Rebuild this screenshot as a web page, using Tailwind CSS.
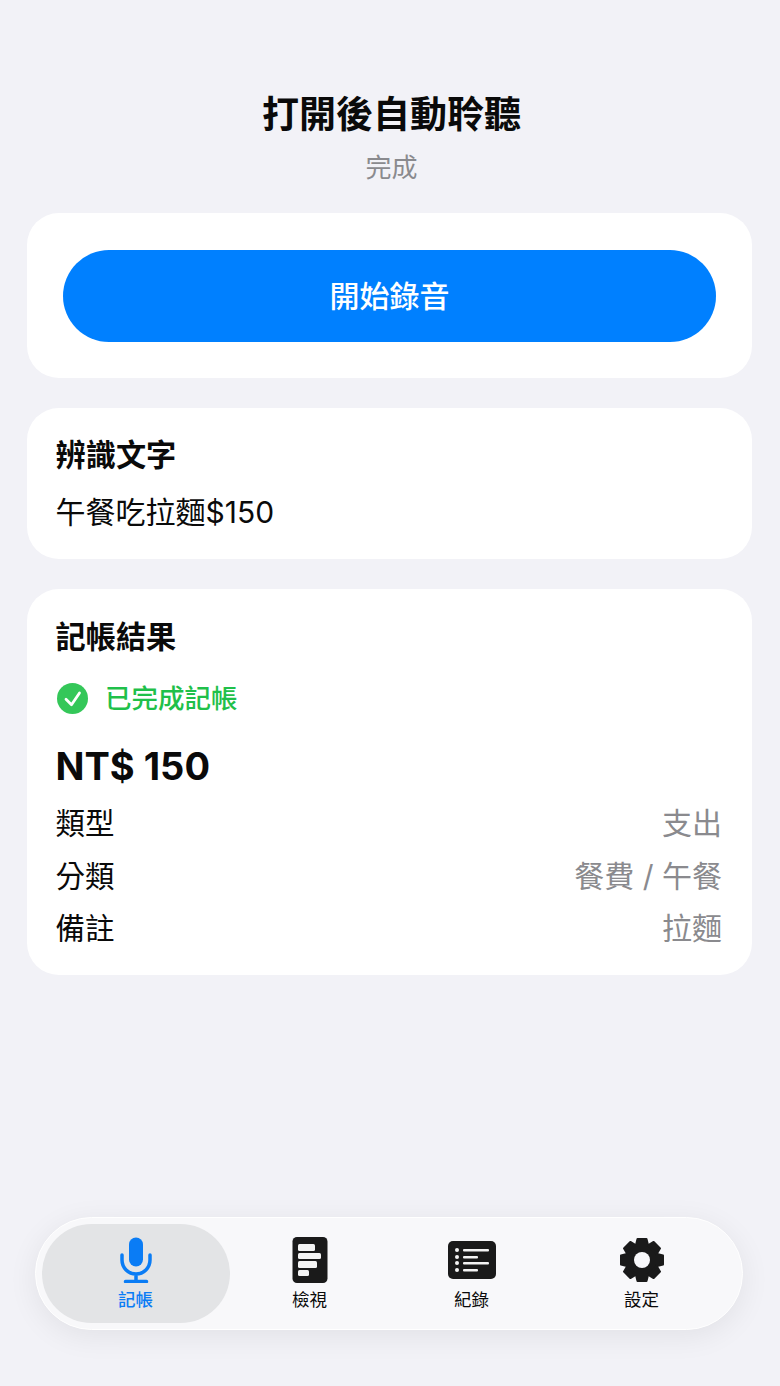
<!DOCTYPE html>
<html lang="zh-TW">
<head>
    <meta charset="UTF-8">
    <meta name="viewport" content="width=device-width, initial-scale=1.0">
    <title>打開後自動聆聽</title>
    <script src="https://cdn.jsdelivr.net/npm/@tailwindcss/browser@4"></script>
</head>
<body class="bg-[#f2f2f7] h-[1386px] w-[780px] overflow-hidden flex flex-col font-['Inter','Noto_Sans_CJK_TC',sans-serif] text-[#0a0a0a]">
    <!-- Header -->
    <header class="pt-[92px] pl-[3px] text-center">
        <h1 class="text-[37px] leading-[46px] font-bold">打開後自動聆聽</h1>
        <p class="mt-[13px] text-[26px] leading-[34px] text-[#8a8a8e]">完成</p>
    </header>

    <main class="mt-[28px] ml-[27px] mr-[28px] flex flex-col gap-[30px]">
        <!-- Record button -->
        <section class="bg-white rounded-[32px] px-[36px] pt-[37px] h-[165px]">
            <button class="w-full h-[92px] rounded-full bg-[#0080ff] text-white text-[30px] font-medium">開始錄音</button>
        </section>

        <!-- Recognized text -->
        <section class="bg-white rounded-[32px] h-[151px] pl-[28.5px] pr-[30px] pt-[27px]">
            <h2 class="text-[30.200px] leading-[40px] font-semibold">辨識文字</h2>
            <p class="mt-[17px] text-[30px] leading-[40px]">午餐吃拉麵$150</p>
        </section>

        <!-- Result -->
        <section class="bg-white rounded-[32px] h-[386px] pl-[28.5px] pr-[30px] pt-[28px]">
            <h2 class="text-[30.200px] leading-[40px] font-semibold">記帳結果</h2>
            <div class="mt-[23px] ml-[1.500px] flex items-center gap-[17px]">
                <svg class="w-[31px] h-[31px] shrink-0" viewBox="0 0 31 31">
                    <circle cx="15.500" cy="15.500" r="15.500" fill="#34c759"/>
                    <path d="M9 16.300l5.500 5.500L22.500 10" fill="none" stroke="#fff" stroke-width="2.800" stroke-linecap="round" stroke-linejoin="round"/>
                </svg>
                <span class="text-[26.500px] leading-[36px] font-medium text-[#1fc04a]">已完成記帳</span>
            </div>
            <p class="mt-[27px] text-[38px] leading-[46px] font-bold">NT$ 150</p>
            <dl class="mt-[8px] text-[29.500px] leading-[52.500px]">
                <div class="flex justify-between"><dt>類型</dt><dd class="text-[30px] text-[#8a8a8e]">支出</dd></div>
                <div class="flex justify-between"><dt>分類</dt><dd class="text-[30px] text-[#8a8a8e]">餐費 / 午餐</dd></div>
                <div class="flex justify-between"><dt>備註</dt><dd class="text-[30px] text-[#8a8a8e]">拉麵</dd></div>
            </dl>
        </section>
    </main>

    <!-- Tab bar -->
    <nav class="mt-auto mb-[56px] ml-[35px] mr-[37px] h-[113px] rounded-full bg-[#f8f8fa] border-[1.500px] border-white shadow-[0_6px_30px_rgba(0,0,0,0.07)] flex items-center px-[5.500px]">
        <a class="w-[188px] h-[99px] rounded-full bg-[#e3e4e6] flex flex-col items-center pt-[13px] text-[#0a7cf5]">
            <svg class="w-[32px] h-[46px]" viewBox="0 0 32 46">
                <rect x="9" y="0.500" width="14" height="29" rx="7" fill="#0a7cf5"/>
                <path d="M2 18v5a14 14 0 0 0 28 0v-5M16 37v7M5.500 44.500h21" fill="none" stroke="#0a7cf5" stroke-width="3.500" stroke-linecap="round"/>
            </svg>
            <span class="mt-[5px] text-[17.500px] leading-[24px] font-medium">記帳</span>
        </a>
        <a class="w-[160px] pt-[1px] flex flex-col items-center">
            <svg class="w-[36px] h-[46px]" viewBox="0 0 36 46">
                <rect x="0.500" y="0" width="35" height="46" rx="4.500" fill="#1a1a1a"/>
                <rect x="6" y="7" width="17" height="7" rx="1.500" fill="#f4f4f4"/>
                <rect x="6" y="16" width="23" height="6" rx="1.500" fill="#f4f4f4"/>
                <rect x="6" y="24" width="19" height="7" rx="1.500" fill="#f4f4f4"/>
                <rect x="6" y="33" width="11" height="6" rx="1.500" fill="#f4f4f4"/>
            </svg>
            <span class="mt-[5px] text-[17.500px] leading-[24px]">檢視</span>
        </a>
        <a class="w-[164px] pt-[1px] flex flex-col items-center">
            <svg class="w-[48px] h-[46px]" viewBox="0 0 48 46">
                <rect x="0" y="4" width="48" height="38" rx="5" fill="#1a1a1a"/>
                <g fill="#f4f4f4">
                    <circle cx="9" cy="13" r="2"/><circle cx="9" cy="20" r="2"/><circle cx="9" cy="26" r="2"/><circle cx="9" cy="33" r="2"/>
                    <rect x="15" y="12" width="26" height="2.500" rx="1"/><rect x="15" y="19" width="15" height="2.500" rx="1"/><rect x="15" y="25" width="26" height="2.500" rx="1"/><rect x="15" y="32" width="15" height="2.500" rx="1"/>
                </g>
            </svg>
            <span class="mt-[5px] text-[17.500px] leading-[24px]">紀錄</span>
        </a>
        <a class="w-[176px] pt-[1px] flex flex-col items-center">
            <svg class="w-[46px] h-[46px]" viewBox="-23 -23 46 46">
                <g fill="#1a1a1a" stroke="#1a1a1a" stroke-width="2" stroke-linejoin="round">
                    <circle r="15.500"/>
                    <path d="M-6-15L-4.500-21H4.500L6-15Z"/>
                    <path transform="rotate(45)" d="M-6-15L-4.500-21H4.500L6-15Z"/>
                    <path transform="rotate(90)" d="M-6-15L-4.500-21H4.500L6-15Z"/>
                    <path transform="rotate(135)" d="M-6-15L-4.500-21H4.500L6-15Z"/>
                    <path transform="rotate(180)" d="M-6-15L-4.500-21H4.500L6-15Z"/>
                    <path transform="rotate(225)" d="M-6-15L-4.500-21H4.500L6-15Z"/>
                    <path transform="rotate(270)" d="M-6-15L-4.500-21H4.500L6-15Z"/>
                    <path transform="rotate(315)" d="M-6-15L-4.500-21H4.500L6-15Z"/>
                </g>
                <circle r="8" fill="#f8f8fa"/>
            </svg>
            <span class="mt-[5px] text-[17.500px] leading-[24px]">設定</span>
        </a>
    </nav>
</body>
</html>
